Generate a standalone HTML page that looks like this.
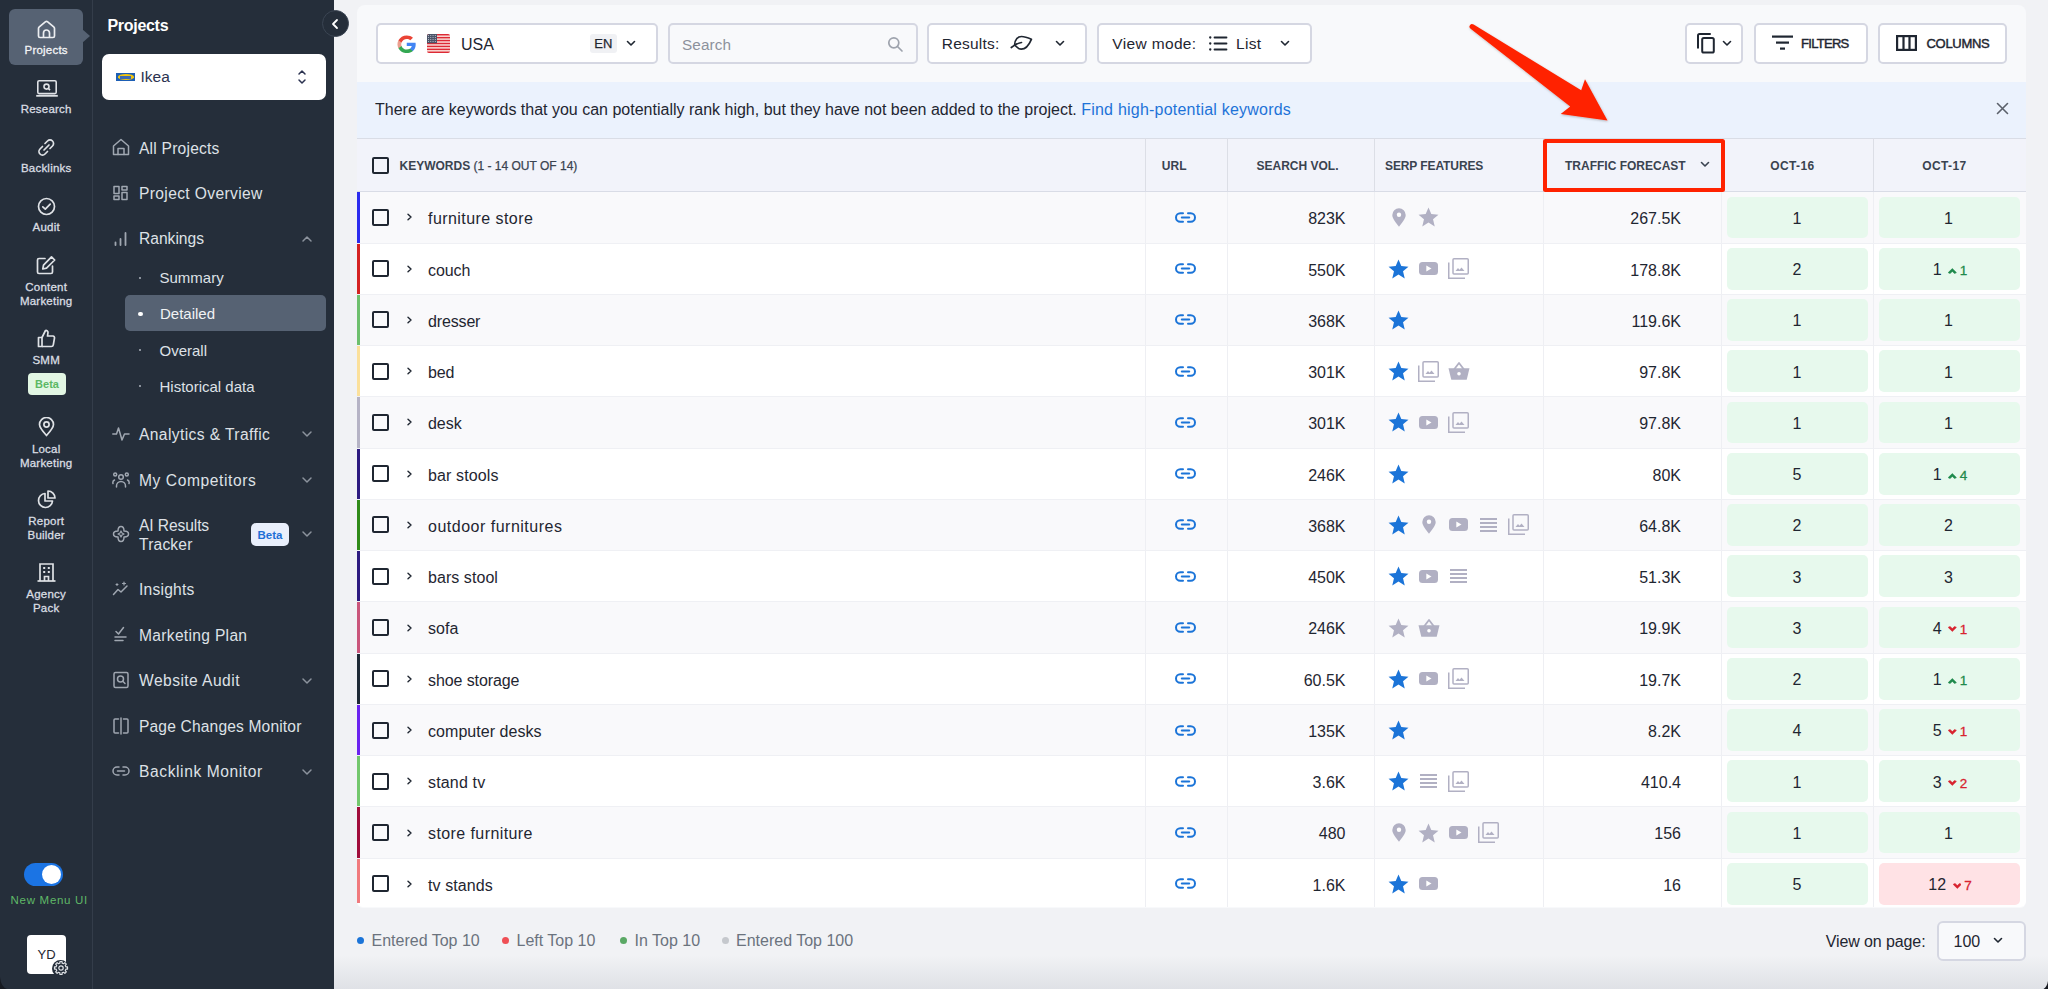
<!DOCTYPE html>
<html><head><meta charset="utf-8">
<style>
*{box-sizing:border-box;margin:0;padding:0}
html,body{width:2048px;height:989px;overflow:hidden}
body{position:relative;background:#f1f2f5;font-family:"Liberation Sans",sans-serif;color:#1f2631}
.a{position:absolute}
.t{white-space:nowrap}
svg{display:block;position:absolute}
</style></head><body>
<div class="a" style="left:0;top:0;width:92px;height:989px;background:#252e3a"></div>
<div class="a" style="left:92px;top:0;width:1px;height:989px;background:#343d4a"></div>
<div class="a" style="left:93px;top:0;width:241px;height:989px;background:#252e3a"></div>
<div class="a" style="left:9px;top:9px;width:74px;height:56px;border-radius:6px;background:#566273"></div>
<div class="a" style="left:82px;top:29px;width:0;height:0;border-top:7px solid transparent;border-bottom:7px solid transparent;border-left:8px solid #566273"></div>
<svg style="left:37px;top:19.5px" width="19" height="19" viewBox="0 0 19 19" fill="none" stroke="#eceef1" stroke-width="1.7" stroke-linejoin="round"><path d="M1.5 8.5 Q1.5 7.6 2.3 6.9 L8.3 1.9 Q9.5 1 10.7 1.9 L16.7 6.9 Q17.5 7.6 17.5 8.5 V16 Q17.5 17.5 16 17.5 H3 Q1.5 17.5 1.5 16 Z"/><path d="M6.5 17.5 V13 A3 3 0 0 1 12.5 13 V17.5"/></svg>
<div class="a t" style="left:0.20000000000000284px;width:92px;text-align:center;top:44.32px;font-size:11.5px;line-height:13.8px;color:#f3f4f6;letter-spacing:0.22px;-webkit-text-stroke:0.3px #f3f4f6;">Projects</div>
<svg style="left:35.5px;top:79px" width="22" height="18" viewBox="0 0 22 18" fill="none" stroke="#dfe2e6" stroke-width="1.6"><rect x="1.8" y="1.8" width="18.4" height="12.8" rx="1.3"/><path d="M0.2 16.8 H21.8" stroke-width="1.8"/><circle cx="10.5" cy="7.6" r="2.5"/><path d="M12.3 9.4 L14 11.1"/></svg>
<div class="a t" style="left:0.20000000000000284px;width:92px;text-align:center;top:103.32px;font-size:11.5px;line-height:13.8px;color:#d9dde2;letter-spacing:0.22px;-webkit-text-stroke:0.3px #d9dde2;">Research</div>
<svg style="left:37px;top:138px" width="19" height="19" viewBox="0 0 19 19" fill="none" stroke="#dfe2e6" stroke-width="1.7" stroke-linecap="round"><path d="M8 5.5 L10.5 3 A3.2 3.2 0 0 1 15.5 8 L13 10.5"/><path d="M10.5 13.5 L8 16 A3.2 3.2 0 0 1 3 11 L5.5 8.5"/><path d="M7 12 L12 7"/></svg>
<div class="a t" style="left:0.20000000000000284px;width:92px;text-align:center;top:162.32px;font-size:11.5px;line-height:13.8px;color:#d9dde2;letter-spacing:0.22px;-webkit-text-stroke:0.3px #d9dde2;">Backlinks</div>
<svg style="left:37px;top:197px" width="19" height="19" viewBox="0 0 19 19" fill="none" stroke="#dfe2e6" stroke-width="1.7" stroke-linecap="round" stroke-linejoin="round"><circle cx="9.5" cy="9.5" r="8"/><path d="M5.8 9.8 L8.3 12.2 L13.2 7.2"/></svg>
<div class="a t" style="left:0.20000000000000284px;width:92px;text-align:center;top:221.32px;font-size:11.5px;line-height:13.8px;color:#d9dde2;letter-spacing:0.22px;-webkit-text-stroke:0.3px #d9dde2;">Audit</div>
<svg style="left:36px;top:255px" width="21" height="20" viewBox="0 0 21 20" fill="none" stroke="#dfe2e6" stroke-width="1.7" stroke-linejoin="round" stroke-linecap="round"><path d="M9 3.5 H3 A1.5 1.5 0 0 0 1.5 5 V17 A1.5 1.5 0 0 0 3 18.5 H15 A1.5 1.5 0 0 0 16.5 17 V11"/><path d="M15.5 1.8 L18.7 5 L10.5 13.2 L6.8 14 L7.5 10.2 Z"/></svg>
<div class="a t" style="left:0.20000000000000284px;width:92px;text-align:center;top:280.82px;font-size:11.5px;line-height:13.8px;color:#d9dde2;letter-spacing:0.22px;-webkit-text-stroke:0.3px #d9dde2;">Content</div>
<div class="a t" style="left:0.20000000000000284px;width:92px;text-align:center;top:294.82px;font-size:11.5px;line-height:13.8px;color:#d9dde2;letter-spacing:0.22px;-webkit-text-stroke:0.3px #d9dde2;">Marketing</div>
<svg style="left:37px;top:329px" width="19" height="19" viewBox="0 0 19 19" fill="none" stroke="#dfe2e6" stroke-width="1.7" stroke-linejoin="round"><path d="M1.5 8.5 H5 V17.5 H1.5 Z"/><path d="M5 8.5 L8.5 1.5 A2 2 0 0 1 11 3.5 L10.5 7 H16 A1.7 1.7 0 0 1 17.5 9 L16.3 15.8 A2 2 0 0 1 14.3 17.5 H5"/></svg>
<div class="a t" style="left:0.20000000000000284px;width:92px;text-align:center;top:353.82px;font-size:11.5px;line-height:13.8px;color:#d9dde2;letter-spacing:0.22px;-webkit-text-stroke:0.3px #d9dde2;">SMM</div>
<div class="a" style="left:28px;top:373px;width:38px;height:22px;border-radius:4px;background:#e2f6e3"></div>
<div class="a t" style="left:28.0px;width:38px;text-align:center;top:377.59px;font-size:11px;line-height:13.2px;color:#5cb864;font-weight:bold;">Beta</div>
<svg style="left:38px;top:417px" width="17" height="20" viewBox="0 0 17 20" fill="none" stroke="#dfe2e6" stroke-width="1.7" stroke-linejoin="round"><path d="M8.5 18.5 C3.5 13 1.5 10 1.5 7.5 A7 7 0 0 1 15.5 7.5 C15.5 10 13.5 13 8.5 18.5 Z"/><circle cx="8.5" cy="7.5" r="2.6"/></svg>
<div class="a t" style="left:0.20000000000000284px;width:92px;text-align:center;top:442.82px;font-size:11.5px;line-height:13.8px;color:#d9dde2;letter-spacing:0.22px;-webkit-text-stroke:0.3px #d9dde2;">Local</div>
<div class="a t" style="left:0.20000000000000284px;width:92px;text-align:center;top:456.82px;font-size:11.5px;line-height:13.8px;color:#d9dde2;letter-spacing:0.22px;-webkit-text-stroke:0.3px #d9dde2;">Marketing</div>
<svg style="left:37px;top:490px" width="19" height="19" viewBox="0 0 19 19" fill="none" stroke="#dfe2e6" stroke-width="1.7" stroke-linejoin="round"><path d="M8 3.5 A7 7 0 1 0 15.5 11 H8 Z"/><path d="M11 1 A7 7 0 0 1 18 8 H11 Z"/></svg>
<div class="a t" style="left:0.20000000000000284px;width:92px;text-align:center;top:515.32px;font-size:11.5px;line-height:13.8px;color:#d9dde2;letter-spacing:0.22px;-webkit-text-stroke:0.3px #d9dde2;">Report</div>
<div class="a t" style="left:0.20000000000000284px;width:92px;text-align:center;top:528.82px;font-size:11.5px;line-height:13.8px;color:#d9dde2;letter-spacing:0.22px;-webkit-text-stroke:0.3px #d9dde2;">Builder</div>
<svg style="left:36px;top:562px" width="21" height="20" viewBox="0 0 21 20" fill="none" stroke="#dfe2e6" stroke-width="1.7"><path d="M4 19 V2 H17 V19"/><path d="M1.5 19 H19.5"/><path d="M8.5 19 V14.5 H12.5 V19"/><path d="M7.2 6 h2 M11.8 6 h2 M7.2 10 h2 M11.8 10 h2" stroke-width="1.8"/></svg>
<div class="a t" style="left:0.20000000000000284px;width:92px;text-align:center;top:588.32px;font-size:11.5px;line-height:13.8px;color:#d9dde2;letter-spacing:0.22px;-webkit-text-stroke:0.3px #d9dde2;">Agency</div>
<div class="a t" style="left:0.20000000000000284px;width:92px;text-align:center;top:601.82px;font-size:11.5px;line-height:13.8px;color:#d9dde2;letter-spacing:0.22px;-webkit-text-stroke:0.3px #d9dde2;">Pack</div>
<div class="a" style="left:24px;top:863px;width:39px;height:23px;border-radius:12px;background:#1b74e4"></div>
<div class="a" style="left:42px;top:865px;width:19px;height:19px;border-radius:50%;background:#fff"></div>
<div class="a t" style="left:3.299999999999997px;width:92px;text-align:center;top:893.82px;font-size:11.5px;line-height:13.8px;color:#5fb867;letter-spacing:0.7px;">New Menu UI</div>
<div class="a" style="left:27px;top:935px;width:39px;height:39px;border-radius:4px;background:#fff"></div>
<div class="a t" style="left:26.5px;width:40px;text-align:center;top:946.70px;font-size:13px;line-height:15.6px;color:#1f2631;">YD</div>
<div class="a" style="left:52px;top:960px;width:17px;height:17px;border-radius:50%;background:#252e3a"></div>
<svg style="left:52.5px;top:960px" width="16" height="16" viewBox="0 0 16 16" fill="none" stroke="#dfe2e6" stroke-width="1.2" stroke-linejoin="round"><circle cx="8" cy="8" r="2.2"/><path d="M12.87 6.88 L14.52 6.97 L14.52 9.03 L12.87 9.12 L12.24 10.65 L13.34 11.88 L11.88 13.34 L10.65 12.24 L9.12 12.87 L9.03 14.52 L6.97 14.52 L6.88 12.87 L5.35 12.24 L4.12 13.34 L2.66 11.88 L3.76 10.65 L3.13 9.12 L1.48 9.03 L1.48 6.97 L3.13 6.88 L3.76 5.35 L2.66 4.12 L4.12 2.66 L5.35 3.76 L6.88 3.13 L6.97 1.48 L9.03 1.48 L9.12 3.13 L10.65 3.76 L11.88 2.66 L13.34 4.12 L12.24 5.35 Z"/></svg>
<div class="a" style="left:357px;top:5px;width:1669px;height:903px;background:#f8f9fb;border-radius:8px 8px 6px 6px;overflow:hidden"></div>
<div class="a" style="left:376px;top:23px;width:282px;height:40.5px;border:2px solid #d5d7e2;border-radius:5px;background:#fff"></div>
<svg style="left:396.5px;top:34.5px" width="19.5" height="18.5" viewBox="1 1 46 46" preserveAspectRatio="none"><path fill="#4285F4" d="M45.1 24.5c0-1.6-.1-3.1-.4-4.5H24v8.5h11.8c-.5 2.8-2.1 5.1-4.4 6.7v5.5h7.1c4.2-3.9 6.6-9.6 6.6-16.2z"/><path fill="#34A853" d="M24 46c5.9 0 10.9-2 14.5-5.3l-7.1-5.5c-2 1.3-4.5 2.1-7.4 2.1-5.7 0-10.6-3.9-12.3-9.1H4.4v5.7C8 41.1 15.4 46 24 46z"/><path fill="#ec9f8f" d="M11.7 28.2c-.4-1.3-.7-2.7-.7-4.2s.3-2.9.7-4.2v-5.7H4.4C2.9 17.1 2 20.4 2 24s.9 6.9 2.4 9.9l7.3-5.7z"/><path fill="#EA4335" d="M24 10.7c3.2 0 6.1 1.1 8.4 3.3l6.3-6.3C34.9 4.1 29.9 2 24 2 15.4 2 8 6.9 4.4 14.1l7.3 5.7c1.7-5.2 6.6-9.1 12.3-9.1z"/></svg>
<svg style="left:427px;top:34px" width="23" height="19" viewBox="0 0 23 19"><defs><clipPath id="fc"><rect width="23" height="19" rx="2"/></clipPath></defs><g clip-path="url(#fc)"><rect width="23" height="19" fill="#fbe1dc"/><rect y="0.000" width="23" height="1.462" fill="#dd2a35"/><rect y="2.923" width="23" height="1.462" fill="#dd2a35"/><rect y="5.846" width="23" height="1.462" fill="#dd2a35"/><rect y="8.769" width="23" height="1.462" fill="#dd2a35"/><rect y="11.692" width="23" height="1.462" fill="#dd2a35"/><rect y="14.615" width="23" height="1.462" fill="#dd2a35"/><rect y="17.538" width="23" height="1.462" fill="#dd2a35"/><rect width="10" height="9.2" fill="#4b5468"/><g fill="#c9ccd8"><rect x="1.0" y="1.0" width="0.9" height="0.9"/><rect x="3.3" y="1.0" width="0.9" height="0.9"/><rect x="5.6" y="1.0" width="0.9" height="0.9"/><rect x="7.9" y="1.0" width="0.9" height="0.9"/><rect x="1.0" y="3.0" width="0.9" height="0.9"/><rect x="3.3" y="3.0" width="0.9" height="0.9"/><rect x="5.6" y="3.0" width="0.9" height="0.9"/><rect x="7.9" y="3.0" width="0.9" height="0.9"/><rect x="1.0" y="5.0" width="0.9" height="0.9"/><rect x="3.3" y="5.0" width="0.9" height="0.9"/><rect x="5.6" y="5.0" width="0.9" height="0.9"/><rect x="7.9" y="5.0" width="0.9" height="0.9"/><rect x="1.0" y="7.0" width="0.9" height="0.9"/><rect x="3.3" y="7.0" width="0.9" height="0.9"/><rect x="5.6" y="7.0" width="0.9" height="0.9"/><rect x="7.9" y="7.0" width="0.9" height="0.9"/></g></g></svg>
<div class="a t" style="left:461px;top:34.86px;font-size:16px;line-height:19.2px;color:#1f2631;">USA</div>
<div class="a" style="left:590px;top:34px;width:27px;height:19px;border-radius:3px;background:#f0f1f4"></div>
<div class="a t" style="left:583.3px;width:40px;text-align:center;top:36.40px;font-size:13px;line-height:15.6px;color:#1f2631;-webkit-text-stroke:0.25px #1f2631;">EN</div>
<svg style="left:625.5px;top:39.7px" width="10" height="7" viewBox="0 0 10 7" fill="none" stroke="#1f2631" stroke-width="1.6" stroke-linecap="round" stroke-linejoin="round"><path d="M1.5 1.5 L5 5 L8.5 1.5"/></svg>
<div class="a" style="left:667.5px;top:23px;width:250.0px;height:40.5px;border:2px solid #d5d7e2;border-radius:5px;background:#f8f9fb"></div>
<div class="a t" style="left:682px;top:35.52px;font-size:15.3px;line-height:18.36px;color:#8c919b;letter-spacing:0.1px;">Search</div>
<svg style="left:887px;top:35.5px" width="17" height="17" viewBox="0 0 17 17" fill="none" stroke="#9ea3ad" stroke-width="1.7" stroke-linecap="round"><circle cx="6.8" cy="6.8" r="5"/><path d="M10.5 10.5 L15 15"/></svg>
<div class="a" style="left:927px;top:23px;width:159.5px;height:40.5px;border:2px solid #d5d7e2;border-radius:5px;background:#fff"></div>
<div class="a t" style="left:941.8px;top:35.33px;font-size:15.5px;line-height:18.6px;color:#1f2631;letter-spacing:0.2px;">Results:</div>
<svg style="left:1010px;top:35px" width="23" height="16" viewBox="0 0 23 16" fill="none" stroke="#1f2631" stroke-width="1.7" stroke-linecap="round" stroke-linejoin="round"><path d="M4.7 10.1 C4.5 4.5 8 1.5 11.5 1.5 C15 1.5 18.5 3 21.4 4.3 C19 10 15.5 14.2 11.2 14.2 C8.5 14.2 6.5 12 4.7 10.1 Z"/><path d="M1.3 12.5 L4.7 10.1 C7 8.8 9 8 11.5 7.5"/></svg>
<svg style="left:1054.5px;top:39.7px" width="10" height="7" viewBox="0 0 10 7" fill="none" stroke="#1f2631" stroke-width="1.6" stroke-linecap="round" stroke-linejoin="round"><path d="M1.5 1.5 L5 5 L8.5 1.5"/></svg>
<div class="a" style="left:1096.5px;top:23px;width:215.0px;height:40.5px;border:2px solid #d5d7e2;border-radius:5px;background:#fff"></div>
<div class="a t" style="left:1112.3px;top:35.33px;font-size:15.5px;line-height:18.6px;color:#1f2631;letter-spacing:0.35px;">View mode:</div>
<svg style="left:1209px;top:36px" width="19" height="15" viewBox="0 0 19 15" fill="none" stroke="#1f2631" stroke-width="1.8" stroke-linecap="round"><path d="M1.2 1.5 h0.1 M1.2 7.5 h0.1 M1.2 13.5 h0.1" stroke-width="2.3"/><path d="M5.5 1.5 H17.5 M5.5 7.5 H17.5 M5.5 13.5 H17.5"/></svg>
<div class="a t" style="left:1236px;top:35.33px;font-size:15.5px;line-height:18.6px;color:#1f2631;letter-spacing:0.3px;">List</div>
<svg style="left:1279.5px;top:40.2px" width="10" height="7" viewBox="0 0 10 7" fill="none" stroke="#1f2631" stroke-width="1.6" stroke-linecap="round" stroke-linejoin="round"><path d="M1.5 1.5 L5 5 L8.5 1.5"/></svg>
<div class="a" style="left:1684.5px;top:23px;width:58.5px;height:40.5px;border:2px solid #d5d7e2;border-radius:5px;background:#fff"></div>
<svg style="left:1696px;top:32px" width="20" height="22" viewBox="0 0 20 22" fill="none" stroke="#1f2631" stroke-width="2" stroke-linecap="round" stroke-linejoin="round"><path d="M2 15.7 V3.5 Q2 2 3.5 2 H14"/><rect x="6.2" y="5.9" width="11.6" height="14.7" rx="1.6"/></svg>
<svg style="left:1722px;top:40.2px" width="10" height="7" viewBox="0 0 10 7" fill="none" stroke="#1f2631" stroke-width="1.6" stroke-linecap="round" stroke-linejoin="round"><path d="M1.5 1.5 L5 5 L8.5 1.5"/></svg>
<div class="a" style="left:1753.5px;top:23px;width:114.0px;height:40.5px;border:2px solid #d5d7e2;border-radius:5px;background:#fff"></div>
<svg style="left:1772px;top:35px" width="21" height="16" viewBox="0 0 21 16" fill="#1f2631"><rect x="0" y="0.5" width="21" height="2.2"/><rect x="4" y="6.5" width="13" height="2.2"/><rect x="8" y="12.5" width="5" height="2.2"/></svg>
<div class="a t" style="left:1801px;top:36.20px;font-size:13px;line-height:15.6px;color:#1f2631;letter-spacing:-0.7px;-webkit-text-stroke:0.45px #1f2631;">FILTERS</div>
<div class="a" style="left:1877.5px;top:23px;width:129.0px;height:40.5px;border:2px solid #d5d7e2;border-radius:5px;background:#fff"></div>
<svg style="left:1896px;top:35px" width="21" height="16" viewBox="0 0 21 16" fill="none" stroke="#1f2631" stroke-width="2.2"><rect x="1.1" y="1.1" width="18.8" height="13.8"/><path d="M7.5 1 V15 M13.5 1 V15"/></svg>
<div class="a t" style="left:1926.5px;top:36.20px;font-size:13px;line-height:15.6px;color:#1f2631;letter-spacing:-0.3px;-webkit-text-stroke:0.45px #1f2631;">COLUMNS</div>
<div class="a" style="left:357px;top:82px;width:1669px;height:57px;background:#ebf2fd;border-bottom:1px solid #d9dde6"></div>
<div class="a t" style="left:375px;top:100px;font-size:16px;line-height:20px;color:#1f2631">There are keywords that you can potentially rank high, but they have not been added to the project. <span style="color:#1e73d8;letter-spacing:0.22px">Find high-potential keywords</span></div>
<svg style="left:1996px;top:102px" width="13" height="13" viewBox="0 0 13 13" fill="none" stroke="#5b616b" stroke-width="1.6" stroke-linecap="round"><path d="M1.5 1.5 L11.5 11.5 M11.5 1.5 L1.5 11.5"/></svg>
<div class="a" style="left:357px;top:139px;width:1669px;height:53px;background:#f2f3fa;border-bottom:1px solid #d9dce6"></div>
<div class="a" style="left:1145px;top:138px;width:1px;height:53px;background:#dcdee6"></div>
<div class="a" style="left:1227px;top:138px;width:1px;height:53px;background:#dcdee6"></div>
<div class="a" style="left:1374px;top:138px;width:1px;height:53px;background:#dcdee6"></div>
<div class="a" style="left:1543px;top:138px;width:1px;height:53px;background:#dcdee6"></div>
<div class="a" style="left:1721px;top:138px;width:1px;height:53px;background:#dcdee6"></div>
<div class="a" style="left:1873px;top:138px;width:1px;height:53px;background:#dcdee6"></div>
<div class="a" style="left:371.5px;top:156.5px;width:17px;height:17px;border:2px solid #1f2631;border-radius:2px"></div>
<div class="a t" style="left:399.5px;top:158.64px;font-size:12px;line-height:14.4px;color:#3a4350;font-weight:bold;">KEYWORDS <span style="font-weight:normal;-webkit-text-stroke:0.25px #3a4350">(1 - 14 OUT OF 14)</span></div>
<div class="a t" style="left:1134.2px;width:80px;text-align:center;top:158.64px;font-size:12px;line-height:14.4px;color:#3a4350;font-weight:bold;">URL</div>
<div class="a t" style="left:1227.5px;width:140px;text-align:center;top:158.64px;font-size:12px;line-height:14.4px;color:#3a4350;font-weight:bold;">SEARCH VOL.</div>
<div class="a t" style="left:1385px;top:158.64px;font-size:12px;line-height:14.4px;color:#3a4350;font-weight:bold;letter-spacing:-0.1px;">SERP FEATURES</div>
<div class="a t" style="left:1565px;top:158.64px;font-size:12px;line-height:14.4px;color:#3a4350;font-weight:bold;">TRAFFIC FORECAST</div>
<svg style="left:1700px;top:161.0px" width="10" height="7" viewBox="0 0 10 7" fill="none" stroke="#3a4350" stroke-width="1.6" stroke-linecap="round" stroke-linejoin="round"><path d="M1.5 1.5 L5 5 L8.5 1.5"/></svg>
<div class="a t" style="left:1742.4px;width:100px;text-align:center;top:158.64px;font-size:12px;line-height:14.4px;color:#3a4350;font-weight:bold;letter-spacing:0.35px;">OCT-16</div>
<div class="a t" style="left:1894.4px;width:100px;text-align:center;top:158.64px;font-size:12px;line-height:14.4px;color:#3a4350;font-weight:bold;letter-spacing:0.35px;">OCT-17</div>
<div class="a" style="left:357px;top:191.80px;width:1669px;height:51.26px;background:#f9f9fb;"></div>
<div class="a" style="left:357px;top:242.56px;width:1669px;height:1px;background:#eff0f4;z-index:1"></div>
<div class="a" style="left:357px;top:192.30px;width:3px;height:50.26px;background:#2b2bef"></div>
<div class="a" style="left:1145px;top:191.80px;width:1px;height:51.26px;background:#eeeff3"></div>
<div class="a" style="left:1227px;top:191.80px;width:1px;height:51.26px;background:#eeeff3"></div>
<div class="a" style="left:1374px;top:191.80px;width:1px;height:51.26px;background:#eeeff3"></div>
<div class="a" style="left:1543px;top:191.80px;width:1px;height:51.26px;background:#eeeff3"></div>
<div class="a" style="left:1721px;top:191.80px;width:1px;height:51.26px;background:#eeeff3"></div>
<div class="a" style="left:1873px;top:191.80px;width:1px;height:51.26px;background:#eeeff3"></div>
<div class="a" style="left:371.5px;top:208.93px;width:17px;height:17px;border:2px solid #1f2631;border-radius:2px"></div>
<svg style="left:405.5px;top:213.43px" width="7" height="8" viewBox="0 0 7 8" fill="none" stroke="#1f2631" stroke-width="1.4" stroke-linecap="round" stroke-linejoin="round"><path d="M2 1.2 L5 4 L2 6.8"/></svg>
<div class="a t" style="left:428px;top:209.29px;font-size:16px;line-height:19.2px;color:#1f2631;letter-spacing:0.44px;">furniture store</div>
<svg style="left:1175px;top:211.93px" width="21" height="11" viewBox="0 0 21 11" fill="none" stroke="#1b74d8" stroke-width="2" stroke-linecap="round"><path d="M8 1.2 H5.3 A4.3 4.3 0 0 0 5.3 9.8 H8"/><path d="M13 1.2 H15.7 A4.3 4.3 0 0 1 15.7 9.8 H13"/><path d="M6.8 5.5 H14.2"/></svg>
<div class="a t" style="left:1225.5px;width:120px;text-align:right;top:209.29px;font-size:16px;line-height:19.2px;color:#1f2631;">823K</div>
<svg style="left:1391.5px;top:207.93px" width="14" height="19" viewBox="0 0 14 19"><path fill="#b1b0c3" d="M7 0.3 A6.7 6.7 0 0 1 13.7 7 C13.7 10.8 10 14.5 7 18.8 C4 14.5 0.3 10.8 0.3 7 A6.7 6.7 0 0 1 7 0.3 Z"/><circle cx="7" cy="6.8" r="2.2" fill="#fff"/></svg>
<svg style="left:1417.5px;top:207.43px" width="21" height="20" viewBox="0.4 0.2 23.2 22"><path fill="#b1b0c3" d="M12 0.8 L15.1 8 L23 8.6 L17 13.8 L18.9 21.6 L12 17.4 L5.1 21.6 L7 13.8 L1 8.6 L8.9 8 Z"/></svg>
<div class="a t" style="left:1561px;width:120px;text-align:right;top:209.29px;font-size:16px;line-height:19.2px;color:#1f2631;">267.5K</div>
<div class="a" style="left:1726.5px;top:196.50px;width:141.5px;height:41.86px;border-radius:5px;background:#e7f9ed"></div>
<div class="a t" style="left:1757.0px;width:80px;text-align:center;top:208.79px;font-size:16px;line-height:19.2px;color:#1f2631;">1</div>
<div class="a" style="left:1879px;top:196.50px;width:141px;height:41.86px;border-radius:5px;background:#e7f9ed"></div>
<div class="a t" style="left:1908.5px;width:80px;text-align:center;top:208.79px;font-size:16px;line-height:19.2px;color:#1f2631;">1</div>
<div class="a" style="left:357px;top:243.06px;width:1669px;height:51.26px;background:#ffffff;"></div>
<div class="a" style="left:357px;top:293.82px;width:1669px;height:1px;background:#eff0f4;z-index:1"></div>
<div class="a" style="left:357px;top:243.56px;width:3px;height:50.26px;background:#d42222"></div>
<div class="a" style="left:1145px;top:243.06px;width:1px;height:51.26px;background:#eeeff3"></div>
<div class="a" style="left:1227px;top:243.06px;width:1px;height:51.26px;background:#eeeff3"></div>
<div class="a" style="left:1374px;top:243.06px;width:1px;height:51.26px;background:#eeeff3"></div>
<div class="a" style="left:1543px;top:243.06px;width:1px;height:51.26px;background:#eeeff3"></div>
<div class="a" style="left:1721px;top:243.06px;width:1px;height:51.26px;background:#eeeff3"></div>
<div class="a" style="left:1873px;top:243.06px;width:1px;height:51.26px;background:#eeeff3"></div>
<div class="a" style="left:371.5px;top:260.19px;width:17px;height:17px;border:2px solid #1f2631;border-radius:2px"></div>
<svg style="left:405.5px;top:264.69px" width="7" height="8" viewBox="0 0 7 8" fill="none" stroke="#1f2631" stroke-width="1.4" stroke-linecap="round" stroke-linejoin="round"><path d="M2 1.2 L5 4 L2 6.8"/></svg>
<div class="a t" style="left:428px;top:260.55px;font-size:16px;line-height:19.2px;color:#1f2631;letter-spacing:-0.1px;">couch</div>
<svg style="left:1175px;top:263.19px" width="21" height="11" viewBox="0 0 21 11" fill="none" stroke="#1b74d8" stroke-width="2" stroke-linecap="round"><path d="M8 1.2 H5.3 A4.3 4.3 0 0 0 5.3 9.8 H8"/><path d="M13 1.2 H15.7 A4.3 4.3 0 0 1 15.7 9.8 H13"/><path d="M6.8 5.5 H14.2"/></svg>
<div class="a t" style="left:1225.5px;width:120px;text-align:right;top:260.55px;font-size:16px;line-height:19.2px;color:#1f2631;">550K</div>
<svg style="left:1387.5px;top:258.69px" width="21" height="20" viewBox="0.4 0.2 23.2 22"><path fill="#1b74d8" d="M12 0.8 L15.1 8 L23 8.6 L17 13.8 L18.9 21.6 L12 17.4 L5.1 21.6 L7 13.8 L1 8.6 L8.9 8 Z"/></svg>
<svg style="left:1419.0px;top:262.19px" width="19" height="13" viewBox="0 0 19 13"><rect width="19" height="13" rx="3.5" fill="#b1b0c3"/><path d="M7.3 3.5 L12.5 6.5 L7.3 9.5 Z" fill="#fff"/></svg>
<svg style="left:1448.0px;top:258.19px" width="21" height="21" viewBox="0 0 21 21" fill="none" stroke="#b1b0c3" stroke-width="1.5"><rect x="5" y="0.75" width="15.25" height="15.25" rx="1"/><path d="M0.75 4.5 V20.25 H17"/><path d="M7.5 13 L10 10 L11.5 11.8 L13.5 9.5 L16.5 13 Z" fill="#b1b0c3" stroke="none"/></svg>
<div class="a t" style="left:1561px;width:120px;text-align:right;top:260.55px;font-size:16px;line-height:19.2px;color:#1f2631;">178.8K</div>
<div class="a" style="left:1726.5px;top:247.76px;width:141.5px;height:41.86px;border-radius:5px;background:#e7f9ed"></div>
<div class="a t" style="left:1757.0px;width:80px;text-align:center;top:260.05px;font-size:16px;line-height:19.2px;color:#1f2631;">2</div>
<div class="a" style="left:1879px;top:247.76px;width:141px;height:41.86px;border-radius:5px;background:#e7f9ed"></div>
<div class="a t" style="left:1890.0px;width:120px;text-align:center;top:260.05px;font-size:16px;line-height:19.2px;color:#1f2631;">1<svg style="position:relative;display:inline-block;margin:0 3px 0 6.5px;vertical-align:1.5px" width="8.6" height="6" viewBox="0 0 8.6 6"><path d="M0.2 4.6 L4.3 0.6 L8.4 4.6 L6.6 5.6 L4.3 3.4 L2 5.6 Z" fill="#1f8a4c" stroke="#1f8a4c" stroke-width="0.6" stroke-linejoin="round"/></svg><span style="color:#1f8a4c;font-size:13.5px;-webkit-text-stroke:0.3px #1f8a4c">1</span></div>
<div class="a" style="left:357px;top:294.32px;width:1669px;height:51.26px;background:#f9f9fb;"></div>
<div class="a" style="left:357px;top:345.08px;width:1669px;height:1px;background:#eff0f4;z-index:1"></div>
<div class="a" style="left:357px;top:294.82px;width:3px;height:50.26px;background:#6dbf6d"></div>
<div class="a" style="left:1145px;top:294.32px;width:1px;height:51.26px;background:#eeeff3"></div>
<div class="a" style="left:1227px;top:294.32px;width:1px;height:51.26px;background:#eeeff3"></div>
<div class="a" style="left:1374px;top:294.32px;width:1px;height:51.26px;background:#eeeff3"></div>
<div class="a" style="left:1543px;top:294.32px;width:1px;height:51.26px;background:#eeeff3"></div>
<div class="a" style="left:1721px;top:294.32px;width:1px;height:51.26px;background:#eeeff3"></div>
<div class="a" style="left:1873px;top:294.32px;width:1px;height:51.26px;background:#eeeff3"></div>
<div class="a" style="left:371.5px;top:311.45px;width:17px;height:17px;border:2px solid #1f2631;border-radius:2px"></div>
<svg style="left:405.5px;top:315.95px" width="7" height="8" viewBox="0 0 7 8" fill="none" stroke="#1f2631" stroke-width="1.4" stroke-linecap="round" stroke-linejoin="round"><path d="M2 1.2 L5 4 L2 6.8"/></svg>
<div class="a t" style="left:428px;top:311.81px;font-size:16px;line-height:19.2px;color:#1f2631;letter-spacing:-0.15px;">dresser</div>
<svg style="left:1175px;top:314.45px" width="21" height="11" viewBox="0 0 21 11" fill="none" stroke="#1b74d8" stroke-width="2" stroke-linecap="round"><path d="M8 1.2 H5.3 A4.3 4.3 0 0 0 5.3 9.8 H8"/><path d="M13 1.2 H15.7 A4.3 4.3 0 0 1 15.7 9.8 H13"/><path d="M6.8 5.5 H14.2"/></svg>
<div class="a t" style="left:1225.5px;width:120px;text-align:right;top:311.81px;font-size:16px;line-height:19.2px;color:#1f2631;">368K</div>
<svg style="left:1387.5px;top:309.95px" width="21" height="20" viewBox="0.4 0.2 23.2 22"><path fill="#1b74d8" d="M12 0.8 L15.1 8 L23 8.6 L17 13.8 L18.9 21.6 L12 17.4 L5.1 21.6 L7 13.8 L1 8.6 L8.9 8 Z"/></svg>
<div class="a t" style="left:1561px;width:120px;text-align:right;top:311.81px;font-size:16px;line-height:19.2px;color:#1f2631;">119.6K</div>
<div class="a" style="left:1726.5px;top:299.02px;width:141.5px;height:41.86px;border-radius:5px;background:#e7f9ed"></div>
<div class="a t" style="left:1757.0px;width:80px;text-align:center;top:311.31px;font-size:16px;line-height:19.2px;color:#1f2631;">1</div>
<div class="a" style="left:1879px;top:299.02px;width:141px;height:41.86px;border-radius:5px;background:#e7f9ed"></div>
<div class="a t" style="left:1908.5px;width:80px;text-align:center;top:311.31px;font-size:16px;line-height:19.2px;color:#1f2631;">1</div>
<div class="a" style="left:357px;top:345.58px;width:1669px;height:51.26px;background:#ffffff;"></div>
<div class="a" style="left:357px;top:396.34px;width:1669px;height:1px;background:#eff0f4;z-index:1"></div>
<div class="a" style="left:357px;top:346.08px;width:3px;height:50.26px;background:#fbe09b"></div>
<div class="a" style="left:1145px;top:345.58px;width:1px;height:51.26px;background:#eeeff3"></div>
<div class="a" style="left:1227px;top:345.58px;width:1px;height:51.26px;background:#eeeff3"></div>
<div class="a" style="left:1374px;top:345.58px;width:1px;height:51.26px;background:#eeeff3"></div>
<div class="a" style="left:1543px;top:345.58px;width:1px;height:51.26px;background:#eeeff3"></div>
<div class="a" style="left:1721px;top:345.58px;width:1px;height:51.26px;background:#eeeff3"></div>
<div class="a" style="left:1873px;top:345.58px;width:1px;height:51.26px;background:#eeeff3"></div>
<div class="a" style="left:371.5px;top:362.71px;width:17px;height:17px;border:2px solid #1f2631;border-radius:2px"></div>
<svg style="left:405.5px;top:367.21px" width="7" height="8" viewBox="0 0 7 8" fill="none" stroke="#1f2631" stroke-width="1.4" stroke-linecap="round" stroke-linejoin="round"><path d="M2 1.2 L5 4 L2 6.8"/></svg>
<div class="a t" style="left:428px;top:363.07px;font-size:16px;line-height:19.2px;color:#1f2631;letter-spacing:-0.15px;">bed</div>
<svg style="left:1175px;top:365.71px" width="21" height="11" viewBox="0 0 21 11" fill="none" stroke="#1b74d8" stroke-width="2" stroke-linecap="round"><path d="M8 1.2 H5.3 A4.3 4.3 0 0 0 5.3 9.8 H8"/><path d="M13 1.2 H15.7 A4.3 4.3 0 0 1 15.7 9.8 H13"/><path d="M6.8 5.5 H14.2"/></svg>
<div class="a t" style="left:1225.5px;width:120px;text-align:right;top:363.07px;font-size:16px;line-height:19.2px;color:#1f2631;">301K</div>
<svg style="left:1387.5px;top:361.21000000000004px" width="21" height="20" viewBox="0.4 0.2 23.2 22"><path fill="#1b74d8" d="M12 0.8 L15.1 8 L23 8.6 L17 13.8 L18.9 21.6 L12 17.4 L5.1 21.6 L7 13.8 L1 8.6 L8.9 8 Z"/></svg>
<svg style="left:1418.0px;top:360.71000000000004px" width="21" height="21" viewBox="0 0 21 21" fill="none" stroke="#b1b0c3" stroke-width="1.5"><rect x="5" y="0.75" width="15.25" height="15.25" rx="1"/><path d="M0.75 4.5 V20.25 H17"/><path d="M7.5 13 L10 10 L11.5 11.8 L13.5 9.5 L16.5 13 Z" fill="#b1b0c3" stroke="none"/></svg>
<svg style="left:1447.5px;top:361.21000000000004px" width="22" height="20" viewBox="0 0 22 20"><path d="M6 8.5 L11 2 L16 8.5" fill="none" stroke="#b1b0c3" stroke-width="1.8" stroke-linejoin="round"/><path fill="#b1b0c3" d="M0.5 7.3 H21.5 L18.7 18.8 H3.3 Z"/><circle cx="11" cy="12.8" r="1.8" fill="#fff"/></svg>
<div class="a t" style="left:1561px;width:120px;text-align:right;top:363.07px;font-size:16px;line-height:19.2px;color:#1f2631;">97.8K</div>
<div class="a" style="left:1726.5px;top:350.28px;width:141.5px;height:41.86px;border-radius:5px;background:#e7f9ed"></div>
<div class="a t" style="left:1757.0px;width:80px;text-align:center;top:362.57px;font-size:16px;line-height:19.2px;color:#1f2631;">1</div>
<div class="a" style="left:1879px;top:350.28px;width:141px;height:41.86px;border-radius:5px;background:#e7f9ed"></div>
<div class="a t" style="left:1908.5px;width:80px;text-align:center;top:362.57px;font-size:16px;line-height:19.2px;color:#1f2631;">1</div>
<div class="a" style="left:357px;top:396.84px;width:1669px;height:51.26px;background:#f9f9fb;"></div>
<div class="a" style="left:357px;top:447.60px;width:1669px;height:1px;background:#eff0f4;z-index:1"></div>
<div class="a" style="left:357px;top:397.34px;width:3px;height:50.26px;background:#b5b3c5"></div>
<div class="a" style="left:1145px;top:396.84px;width:1px;height:51.26px;background:#eeeff3"></div>
<div class="a" style="left:1227px;top:396.84px;width:1px;height:51.26px;background:#eeeff3"></div>
<div class="a" style="left:1374px;top:396.84px;width:1px;height:51.26px;background:#eeeff3"></div>
<div class="a" style="left:1543px;top:396.84px;width:1px;height:51.26px;background:#eeeff3"></div>
<div class="a" style="left:1721px;top:396.84px;width:1px;height:51.26px;background:#eeeff3"></div>
<div class="a" style="left:1873px;top:396.84px;width:1px;height:51.26px;background:#eeeff3"></div>
<div class="a" style="left:371.5px;top:413.97px;width:17px;height:17px;border:2px solid #1f2631;border-radius:2px"></div>
<svg style="left:405.5px;top:418.47px" width="7" height="8" viewBox="0 0 7 8" fill="none" stroke="#1f2631" stroke-width="1.4" stroke-linecap="round" stroke-linejoin="round"><path d="M2 1.2 L5 4 L2 6.8"/></svg>
<div class="a t" style="left:428px;top:414.33px;font-size:16px;line-height:19.2px;color:#1f2631;letter-spacing:-0.04px;">desk</div>
<svg style="left:1175px;top:416.97px" width="21" height="11" viewBox="0 0 21 11" fill="none" stroke="#1b74d8" stroke-width="2" stroke-linecap="round"><path d="M8 1.2 H5.3 A4.3 4.3 0 0 0 5.3 9.8 H8"/><path d="M13 1.2 H15.7 A4.3 4.3 0 0 1 15.7 9.8 H13"/><path d="M6.8 5.5 H14.2"/></svg>
<div class="a t" style="left:1225.5px;width:120px;text-align:right;top:414.33px;font-size:16px;line-height:19.2px;color:#1f2631;">301K</div>
<svg style="left:1387.5px;top:412.47px" width="21" height="20" viewBox="0.4 0.2 23.2 22"><path fill="#1b74d8" d="M12 0.8 L15.1 8 L23 8.6 L17 13.8 L18.9 21.6 L12 17.4 L5.1 21.6 L7 13.8 L1 8.6 L8.9 8 Z"/></svg>
<svg style="left:1419.0px;top:415.97px" width="19" height="13" viewBox="0 0 19 13"><rect width="19" height="13" rx="3.5" fill="#b1b0c3"/><path d="M7.3 3.5 L12.5 6.5 L7.3 9.5 Z" fill="#fff"/></svg>
<svg style="left:1448.0px;top:411.97px" width="21" height="21" viewBox="0 0 21 21" fill="none" stroke="#b1b0c3" stroke-width="1.5"><rect x="5" y="0.75" width="15.25" height="15.25" rx="1"/><path d="M0.75 4.5 V20.25 H17"/><path d="M7.5 13 L10 10 L11.5 11.8 L13.5 9.5 L16.5 13 Z" fill="#b1b0c3" stroke="none"/></svg>
<div class="a t" style="left:1561px;width:120px;text-align:right;top:414.33px;font-size:16px;line-height:19.2px;color:#1f2631;">97.8K</div>
<div class="a" style="left:1726.5px;top:401.54px;width:141.5px;height:41.86px;border-radius:5px;background:#e7f9ed"></div>
<div class="a t" style="left:1757.0px;width:80px;text-align:center;top:413.83px;font-size:16px;line-height:19.2px;color:#1f2631;">1</div>
<div class="a" style="left:1879px;top:401.54px;width:141px;height:41.86px;border-radius:5px;background:#e7f9ed"></div>
<div class="a t" style="left:1908.5px;width:80px;text-align:center;top:413.83px;font-size:16px;line-height:19.2px;color:#1f2631;">1</div>
<div class="a" style="left:357px;top:448.10px;width:1669px;height:51.26px;background:#ffffff;"></div>
<div class="a" style="left:357px;top:498.86px;width:1669px;height:1px;background:#eff0f4;z-index:1"></div>
<div class="a" style="left:357px;top:448.60px;width:3px;height:50.26px;background:#2d1b80"></div>
<div class="a" style="left:1145px;top:448.10px;width:1px;height:51.26px;background:#eeeff3"></div>
<div class="a" style="left:1227px;top:448.10px;width:1px;height:51.26px;background:#eeeff3"></div>
<div class="a" style="left:1374px;top:448.10px;width:1px;height:51.26px;background:#eeeff3"></div>
<div class="a" style="left:1543px;top:448.10px;width:1px;height:51.26px;background:#eeeff3"></div>
<div class="a" style="left:1721px;top:448.10px;width:1px;height:51.26px;background:#eeeff3"></div>
<div class="a" style="left:1873px;top:448.10px;width:1px;height:51.26px;background:#eeeff3"></div>
<div class="a" style="left:371.5px;top:465.23px;width:17px;height:17px;border:2px solid #1f2631;border-radius:2px"></div>
<svg style="left:405.5px;top:469.73px" width="7" height="8" viewBox="0 0 7 8" fill="none" stroke="#1f2631" stroke-width="1.4" stroke-linecap="round" stroke-linejoin="round"><path d="M2 1.2 L5 4 L2 6.8"/></svg>
<div class="a t" style="left:428px;top:465.59px;font-size:16px;line-height:19.2px;color:#1f2631;letter-spacing:0.12px;">bar stools</div>
<svg style="left:1175px;top:468.23px" width="21" height="11" viewBox="0 0 21 11" fill="none" stroke="#1b74d8" stroke-width="2" stroke-linecap="round"><path d="M8 1.2 H5.3 A4.3 4.3 0 0 0 5.3 9.8 H8"/><path d="M13 1.2 H15.7 A4.3 4.3 0 0 1 15.7 9.8 H13"/><path d="M6.8 5.5 H14.2"/></svg>
<div class="a t" style="left:1225.5px;width:120px;text-align:right;top:465.59px;font-size:16px;line-height:19.2px;color:#1f2631;">246K</div>
<svg style="left:1387.5px;top:463.73px" width="21" height="20" viewBox="0.4 0.2 23.2 22"><path fill="#1b74d8" d="M12 0.8 L15.1 8 L23 8.6 L17 13.8 L18.9 21.6 L12 17.4 L5.1 21.6 L7 13.8 L1 8.6 L8.9 8 Z"/></svg>
<div class="a t" style="left:1561px;width:120px;text-align:right;top:465.59px;font-size:16px;line-height:19.2px;color:#1f2631;">80K</div>
<div class="a" style="left:1726.5px;top:452.80px;width:141.5px;height:41.86px;border-radius:5px;background:#e7f9ed"></div>
<div class="a t" style="left:1757.0px;width:80px;text-align:center;top:465.09px;font-size:16px;line-height:19.2px;color:#1f2631;">5</div>
<div class="a" style="left:1879px;top:452.80px;width:141px;height:41.86px;border-radius:5px;background:#e7f9ed"></div>
<div class="a t" style="left:1890.0px;width:120px;text-align:center;top:465.09px;font-size:16px;line-height:19.2px;color:#1f2631;">1<svg style="position:relative;display:inline-block;margin:0 3px 0 6.5px;vertical-align:1.5px" width="8.6" height="6" viewBox="0 0 8.6 6"><path d="M0.2 4.6 L4.3 0.6 L8.4 4.6 L6.6 5.6 L4.3 3.4 L2 5.6 Z" fill="#1f8a4c" stroke="#1f8a4c" stroke-width="0.6" stroke-linejoin="round"/></svg><span style="color:#1f8a4c;font-size:13.5px;-webkit-text-stroke:0.3px #1f8a4c">4</span></div>
<div class="a" style="left:357px;top:499.36px;width:1669px;height:51.26px;background:#f9f9fb;"></div>
<div class="a" style="left:357px;top:550.12px;width:1669px;height:1px;background:#eff0f4;z-index:1"></div>
<div class="a" style="left:357px;top:499.86px;width:3px;height:50.26px;background:#2f8a19"></div>
<div class="a" style="left:1145px;top:499.36px;width:1px;height:51.26px;background:#eeeff3"></div>
<div class="a" style="left:1227px;top:499.36px;width:1px;height:51.26px;background:#eeeff3"></div>
<div class="a" style="left:1374px;top:499.36px;width:1px;height:51.26px;background:#eeeff3"></div>
<div class="a" style="left:1543px;top:499.36px;width:1px;height:51.26px;background:#eeeff3"></div>
<div class="a" style="left:1721px;top:499.36px;width:1px;height:51.26px;background:#eeeff3"></div>
<div class="a" style="left:1873px;top:499.36px;width:1px;height:51.26px;background:#eeeff3"></div>
<div class="a" style="left:371.5px;top:516.49px;width:17px;height:17px;border:2px solid #1f2631;border-radius:2px"></div>
<svg style="left:405.5px;top:520.99px" width="7" height="8" viewBox="0 0 7 8" fill="none" stroke="#1f2631" stroke-width="1.4" stroke-linecap="round" stroke-linejoin="round"><path d="M2 1.2 L5 4 L2 6.8"/></svg>
<div class="a t" style="left:428px;top:516.85px;font-size:16px;line-height:19.2px;color:#1f2631;letter-spacing:0.5px;">outdoor furnitures</div>
<svg style="left:1175px;top:519.49px" width="21" height="11" viewBox="0 0 21 11" fill="none" stroke="#1b74d8" stroke-width="2" stroke-linecap="round"><path d="M8 1.2 H5.3 A4.3 4.3 0 0 0 5.3 9.8 H8"/><path d="M13 1.2 H15.7 A4.3 4.3 0 0 1 15.7 9.8 H13"/><path d="M6.8 5.5 H14.2"/></svg>
<div class="a t" style="left:1225.5px;width:120px;text-align:right;top:516.85px;font-size:16px;line-height:19.2px;color:#1f2631;">368K</div>
<svg style="left:1387.5px;top:514.99px" width="21" height="20" viewBox="0.4 0.2 23.2 22"><path fill="#1b74d8" d="M12 0.8 L15.1 8 L23 8.6 L17 13.8 L18.9 21.6 L12 17.4 L5.1 21.6 L7 13.8 L1 8.6 L8.9 8 Z"/></svg>
<svg style="left:1421.5px;top:515.49px" width="14" height="19" viewBox="0 0 14 19"><path fill="#b1b0c3" d="M7 0.3 A6.7 6.7 0 0 1 13.7 7 C13.7 10.8 10 14.5 7 18.8 C4 14.5 0.3 10.8 0.3 7 A6.7 6.7 0 0 1 7 0.3 Z"/><circle cx="7" cy="6.8" r="2.2" fill="#fff"/></svg>
<svg style="left:1449.0px;top:518.49px" width="19" height="13" viewBox="0 0 19 13"><rect width="19" height="13" rx="3.5" fill="#b1b0c3"/><path d="M7.3 3.5 L12.5 6.5 L7.3 9.5 Z" fill="#fff"/></svg>
<svg style="left:1480.0px;top:517.99px" width="17" height="14" viewBox="0 0 17 14" fill="#b1b0c3"><rect y="0" width="17" height="2"/><rect y="4" width="17" height="2"/><rect y="8" width="17" height="2"/><rect y="12" width="17" height="2"/></svg>
<svg style="left:1508.0px;top:514.49px" width="21" height="21" viewBox="0 0 21 21" fill="none" stroke="#b1b0c3" stroke-width="1.5"><rect x="5" y="0.75" width="15.25" height="15.25" rx="1"/><path d="M0.75 4.5 V20.25 H17"/><path d="M7.5 13 L10 10 L11.5 11.8 L13.5 9.5 L16.5 13 Z" fill="#b1b0c3" stroke="none"/></svg>
<div class="a t" style="left:1561px;width:120px;text-align:right;top:516.85px;font-size:16px;line-height:19.2px;color:#1f2631;">64.8K</div>
<div class="a" style="left:1726.5px;top:504.06px;width:141.5px;height:41.86px;border-radius:5px;background:#e7f9ed"></div>
<div class="a t" style="left:1757.0px;width:80px;text-align:center;top:516.35px;font-size:16px;line-height:19.2px;color:#1f2631;">2</div>
<div class="a" style="left:1879px;top:504.06px;width:141px;height:41.86px;border-radius:5px;background:#e7f9ed"></div>
<div class="a t" style="left:1908.5px;width:80px;text-align:center;top:516.35px;font-size:16px;line-height:19.2px;color:#1f2631;">2</div>
<div class="a" style="left:357px;top:550.62px;width:1669px;height:51.26px;background:#ffffff;"></div>
<div class="a" style="left:357px;top:601.38px;width:1669px;height:1px;background:#eff0f4;z-index:1"></div>
<div class="a" style="left:357px;top:551.12px;width:3px;height:50.26px;background:#2d1b80"></div>
<div class="a" style="left:1145px;top:550.62px;width:1px;height:51.26px;background:#eeeff3"></div>
<div class="a" style="left:1227px;top:550.62px;width:1px;height:51.26px;background:#eeeff3"></div>
<div class="a" style="left:1374px;top:550.62px;width:1px;height:51.26px;background:#eeeff3"></div>
<div class="a" style="left:1543px;top:550.62px;width:1px;height:51.26px;background:#eeeff3"></div>
<div class="a" style="left:1721px;top:550.62px;width:1px;height:51.26px;background:#eeeff3"></div>
<div class="a" style="left:1873px;top:550.62px;width:1px;height:51.26px;background:#eeeff3"></div>
<div class="a" style="left:371.5px;top:567.75px;width:17px;height:17px;border:2px solid #1f2631;border-radius:2px"></div>
<svg style="left:405.5px;top:572.25px" width="7" height="8" viewBox="0 0 7 8" fill="none" stroke="#1f2631" stroke-width="1.4" stroke-linecap="round" stroke-linejoin="round"><path d="M2 1.2 L5 4 L2 6.8"/></svg>
<div class="a t" style="left:428px;top:568.11px;font-size:16px;line-height:19.2px;color:#1f2631;letter-spacing:0.06px;">bars stool</div>
<svg style="left:1175px;top:570.75px" width="21" height="11" viewBox="0 0 21 11" fill="none" stroke="#1b74d8" stroke-width="2" stroke-linecap="round"><path d="M8 1.2 H5.3 A4.3 4.3 0 0 0 5.3 9.8 H8"/><path d="M13 1.2 H15.7 A4.3 4.3 0 0 1 15.7 9.8 H13"/><path d="M6.8 5.5 H14.2"/></svg>
<div class="a t" style="left:1225.5px;width:120px;text-align:right;top:568.11px;font-size:16px;line-height:19.2px;color:#1f2631;">450K</div>
<svg style="left:1387.5px;top:566.25px" width="21" height="20" viewBox="0.4 0.2 23.2 22"><path fill="#1b74d8" d="M12 0.8 L15.1 8 L23 8.6 L17 13.8 L18.9 21.6 L12 17.4 L5.1 21.6 L7 13.8 L1 8.6 L8.9 8 Z"/></svg>
<svg style="left:1419.0px;top:569.75px" width="19" height="13" viewBox="0 0 19 13"><rect width="19" height="13" rx="3.5" fill="#b1b0c3"/><path d="M7.3 3.5 L12.5 6.5 L7.3 9.5 Z" fill="#fff"/></svg>
<svg style="left:1450.0px;top:569.25px" width="17" height="14" viewBox="0 0 17 14" fill="#b1b0c3"><rect y="0" width="17" height="2"/><rect y="4" width="17" height="2"/><rect y="8" width="17" height="2"/><rect y="12" width="17" height="2"/></svg>
<div class="a t" style="left:1561px;width:120px;text-align:right;top:568.11px;font-size:16px;line-height:19.2px;color:#1f2631;">51.3K</div>
<div class="a" style="left:1726.5px;top:555.32px;width:141.5px;height:41.86px;border-radius:5px;background:#e7f9ed"></div>
<div class="a t" style="left:1757.0px;width:80px;text-align:center;top:567.61px;font-size:16px;line-height:19.2px;color:#1f2631;">3</div>
<div class="a" style="left:1879px;top:555.32px;width:141px;height:41.86px;border-radius:5px;background:#e7f9ed"></div>
<div class="a t" style="left:1908.5px;width:80px;text-align:center;top:567.61px;font-size:16px;line-height:19.2px;color:#1f2631;">3</div>
<div class="a" style="left:357px;top:601.88px;width:1669px;height:51.26px;background:#f9f9fb;"></div>
<div class="a" style="left:357px;top:652.64px;width:1669px;height:1px;background:#eff0f4;z-index:1"></div>
<div class="a" style="left:357px;top:602.38px;width:3px;height:50.26px;background:#c9557b"></div>
<div class="a" style="left:1145px;top:601.88px;width:1px;height:51.26px;background:#eeeff3"></div>
<div class="a" style="left:1227px;top:601.88px;width:1px;height:51.26px;background:#eeeff3"></div>
<div class="a" style="left:1374px;top:601.88px;width:1px;height:51.26px;background:#eeeff3"></div>
<div class="a" style="left:1543px;top:601.88px;width:1px;height:51.26px;background:#eeeff3"></div>
<div class="a" style="left:1721px;top:601.88px;width:1px;height:51.26px;background:#eeeff3"></div>
<div class="a" style="left:1873px;top:601.88px;width:1px;height:51.26px;background:#eeeff3"></div>
<div class="a" style="left:371.5px;top:619.01px;width:17px;height:17px;border:2px solid #1f2631;border-radius:2px"></div>
<svg style="left:405.5px;top:623.51px" width="7" height="8" viewBox="0 0 7 8" fill="none" stroke="#1f2631" stroke-width="1.4" stroke-linecap="round" stroke-linejoin="round"><path d="M2 1.2 L5 4 L2 6.8"/></svg>
<div class="a t" style="left:428px;top:619.37px;font-size:16px;line-height:19.2px;color:#1f2631;letter-spacing:0.08px;">sofa</div>
<svg style="left:1175px;top:622.01px" width="21" height="11" viewBox="0 0 21 11" fill="none" stroke="#1b74d8" stroke-width="2" stroke-linecap="round"><path d="M8 1.2 H5.3 A4.3 4.3 0 0 0 5.3 9.8 H8"/><path d="M13 1.2 H15.7 A4.3 4.3 0 0 1 15.7 9.8 H13"/><path d="M6.8 5.5 H14.2"/></svg>
<div class="a t" style="left:1225.5px;width:120px;text-align:right;top:619.37px;font-size:16px;line-height:19.2px;color:#1f2631;">246K</div>
<svg style="left:1387.5px;top:617.51px" width="21" height="20" viewBox="0.4 0.2 23.2 22"><path fill="#b1b0c3" d="M12 0.8 L15.1 8 L23 8.6 L17 13.8 L18.9 21.6 L12 17.4 L5.1 21.6 L7 13.8 L1 8.6 L8.9 8 Z"/></svg>
<svg style="left:1417.5px;top:617.51px" width="22" height="20" viewBox="0 0 22 20"><path d="M6 8.5 L11 2 L16 8.5" fill="none" stroke="#b1b0c3" stroke-width="1.8" stroke-linejoin="round"/><path fill="#b1b0c3" d="M0.5 7.3 H21.5 L18.7 18.8 H3.3 Z"/><circle cx="11" cy="12.8" r="1.8" fill="#fff"/></svg>
<div class="a t" style="left:1561px;width:120px;text-align:right;top:619.37px;font-size:16px;line-height:19.2px;color:#1f2631;">19.9K</div>
<div class="a" style="left:1726.5px;top:606.58px;width:141.5px;height:41.86px;border-radius:5px;background:#e7f9ed"></div>
<div class="a t" style="left:1757.0px;width:80px;text-align:center;top:618.87px;font-size:16px;line-height:19.2px;color:#1f2631;">3</div>
<div class="a" style="left:1879px;top:606.58px;width:141px;height:41.86px;border-radius:5px;background:#e7f9ed"></div>
<div class="a t" style="left:1890.0px;width:120px;text-align:center;top:618.87px;font-size:16px;line-height:19.2px;color:#1f2631;">4<svg style="position:relative;display:inline-block;margin:0 3px 0 6.5px;vertical-align:1.5px" width="8.6" height="6" viewBox="0 0 8.6 6"><path d="M0.2 1.4 L4.3 5.4 L8.4 1.4 L6.6 0.4 L4.3 2.6 L2 0.4 Z" fill="#d8232f" stroke="#d8232f" stroke-width="0.6" stroke-linejoin="round"/></svg><span style="color:#d8232f;font-size:13.5px;-webkit-text-stroke:0.3px #d8232f">1</span></div>
<div class="a" style="left:357px;top:653.14px;width:1669px;height:51.26px;background:#ffffff;"></div>
<div class="a" style="left:357px;top:703.90px;width:1669px;height:1px;background:#eff0f4;z-index:1"></div>
<div class="a" style="left:357px;top:653.64px;width:3px;height:50.26px;background:#1e2a36"></div>
<div class="a" style="left:1145px;top:653.14px;width:1px;height:51.26px;background:#eeeff3"></div>
<div class="a" style="left:1227px;top:653.14px;width:1px;height:51.26px;background:#eeeff3"></div>
<div class="a" style="left:1374px;top:653.14px;width:1px;height:51.26px;background:#eeeff3"></div>
<div class="a" style="left:1543px;top:653.14px;width:1px;height:51.26px;background:#eeeff3"></div>
<div class="a" style="left:1721px;top:653.14px;width:1px;height:51.26px;background:#eeeff3"></div>
<div class="a" style="left:1873px;top:653.14px;width:1px;height:51.26px;background:#eeeff3"></div>
<div class="a" style="left:371.5px;top:670.27px;width:17px;height:17px;border:2px solid #1f2631;border-radius:2px"></div>
<svg style="left:405.5px;top:674.77px" width="7" height="8" viewBox="0 0 7 8" fill="none" stroke="#1f2631" stroke-width="1.4" stroke-linecap="round" stroke-linejoin="round"><path d="M2 1.2 L5 4 L2 6.8"/></svg>
<div class="a t" style="left:428px;top:670.63px;font-size:16px;line-height:19.2px;color:#1f2631;letter-spacing:-0.1px;">shoe storage</div>
<svg style="left:1175px;top:673.27px" width="21" height="11" viewBox="0 0 21 11" fill="none" stroke="#1b74d8" stroke-width="2" stroke-linecap="round"><path d="M8 1.2 H5.3 A4.3 4.3 0 0 0 5.3 9.8 H8"/><path d="M13 1.2 H15.7 A4.3 4.3 0 0 1 15.7 9.8 H13"/><path d="M6.8 5.5 H14.2"/></svg>
<div class="a t" style="left:1225.5px;width:120px;text-align:right;top:670.63px;font-size:16px;line-height:19.2px;color:#1f2631;">60.5K</div>
<svg style="left:1387.5px;top:668.77px" width="21" height="20" viewBox="0.4 0.2 23.2 22"><path fill="#1b74d8" d="M12 0.8 L15.1 8 L23 8.6 L17 13.8 L18.9 21.6 L12 17.4 L5.1 21.6 L7 13.8 L1 8.6 L8.9 8 Z"/></svg>
<svg style="left:1419.0px;top:672.27px" width="19" height="13" viewBox="0 0 19 13"><rect width="19" height="13" rx="3.5" fill="#b1b0c3"/><path d="M7.3 3.5 L12.5 6.5 L7.3 9.5 Z" fill="#fff"/></svg>
<svg style="left:1448.0px;top:668.27px" width="21" height="21" viewBox="0 0 21 21" fill="none" stroke="#b1b0c3" stroke-width="1.5"><rect x="5" y="0.75" width="15.25" height="15.25" rx="1"/><path d="M0.75 4.5 V20.25 H17"/><path d="M7.5 13 L10 10 L11.5 11.8 L13.5 9.5 L16.5 13 Z" fill="#b1b0c3" stroke="none"/></svg>
<div class="a t" style="left:1561px;width:120px;text-align:right;top:670.63px;font-size:16px;line-height:19.2px;color:#1f2631;">19.7K</div>
<div class="a" style="left:1726.5px;top:657.84px;width:141.5px;height:41.86px;border-radius:5px;background:#e7f9ed"></div>
<div class="a t" style="left:1757.0px;width:80px;text-align:center;top:670.13px;font-size:16px;line-height:19.2px;color:#1f2631;">2</div>
<div class="a" style="left:1879px;top:657.84px;width:141px;height:41.86px;border-radius:5px;background:#e7f9ed"></div>
<div class="a t" style="left:1890.0px;width:120px;text-align:center;top:670.13px;font-size:16px;line-height:19.2px;color:#1f2631;">1<svg style="position:relative;display:inline-block;margin:0 3px 0 6.5px;vertical-align:1.5px" width="8.6" height="6" viewBox="0 0 8.6 6"><path d="M0.2 4.6 L4.3 0.6 L8.4 4.6 L6.6 5.6 L4.3 3.4 L2 5.6 Z" fill="#1f8a4c" stroke="#1f8a4c" stroke-width="0.6" stroke-linejoin="round"/></svg><span style="color:#1f8a4c;font-size:13.5px;-webkit-text-stroke:0.3px #1f8a4c">1</span></div>
<div class="a" style="left:357px;top:704.40px;width:1669px;height:51.26px;background:#f9f9fb;"></div>
<div class="a" style="left:357px;top:755.16px;width:1669px;height:1px;background:#eff0f4;z-index:1"></div>
<div class="a" style="left:357px;top:704.90px;width:3px;height:50.26px;background:#6b23f0"></div>
<div class="a" style="left:1145px;top:704.40px;width:1px;height:51.26px;background:#eeeff3"></div>
<div class="a" style="left:1227px;top:704.40px;width:1px;height:51.26px;background:#eeeff3"></div>
<div class="a" style="left:1374px;top:704.40px;width:1px;height:51.26px;background:#eeeff3"></div>
<div class="a" style="left:1543px;top:704.40px;width:1px;height:51.26px;background:#eeeff3"></div>
<div class="a" style="left:1721px;top:704.40px;width:1px;height:51.26px;background:#eeeff3"></div>
<div class="a" style="left:1873px;top:704.40px;width:1px;height:51.26px;background:#eeeff3"></div>
<div class="a" style="left:371.5px;top:721.53px;width:17px;height:17px;border:2px solid #1f2631;border-radius:2px"></div>
<svg style="left:405.5px;top:726.03px" width="7" height="8" viewBox="0 0 7 8" fill="none" stroke="#1f2631" stroke-width="1.4" stroke-linecap="round" stroke-linejoin="round"><path d="M2 1.2 L5 4 L2 6.8"/></svg>
<div class="a t" style="left:428px;top:721.89px;font-size:16px;line-height:19.2px;color:#1f2631;letter-spacing:0.05px;">computer desks</div>
<svg style="left:1175px;top:724.53px" width="21" height="11" viewBox="0 0 21 11" fill="none" stroke="#1b74d8" stroke-width="2" stroke-linecap="round"><path d="M8 1.2 H5.3 A4.3 4.3 0 0 0 5.3 9.8 H8"/><path d="M13 1.2 H15.7 A4.3 4.3 0 0 1 15.7 9.8 H13"/><path d="M6.8 5.5 H14.2"/></svg>
<div class="a t" style="left:1225.5px;width:120px;text-align:right;top:721.89px;font-size:16px;line-height:19.2px;color:#1f2631;">135K</div>
<svg style="left:1387.5px;top:720.0300000000001px" width="21" height="20" viewBox="0.4 0.2 23.2 22"><path fill="#1b74d8" d="M12 0.8 L15.1 8 L23 8.6 L17 13.8 L18.9 21.6 L12 17.4 L5.1 21.6 L7 13.8 L1 8.6 L8.9 8 Z"/></svg>
<div class="a t" style="left:1561px;width:120px;text-align:right;top:721.89px;font-size:16px;line-height:19.2px;color:#1f2631;">8.2K</div>
<div class="a" style="left:1726.5px;top:709.10px;width:141.5px;height:41.86px;border-radius:5px;background:#e7f9ed"></div>
<div class="a t" style="left:1757.0px;width:80px;text-align:center;top:721.39px;font-size:16px;line-height:19.2px;color:#1f2631;">4</div>
<div class="a" style="left:1879px;top:709.10px;width:141px;height:41.86px;border-radius:5px;background:#e7f9ed"></div>
<div class="a t" style="left:1890.0px;width:120px;text-align:center;top:721.39px;font-size:16px;line-height:19.2px;color:#1f2631;">5<svg style="position:relative;display:inline-block;margin:0 3px 0 6.5px;vertical-align:1.5px" width="8.6" height="6" viewBox="0 0 8.6 6"><path d="M0.2 1.4 L4.3 5.4 L8.4 1.4 L6.6 0.4 L4.3 2.6 L2 0.4 Z" fill="#d8232f" stroke="#d8232f" stroke-width="0.6" stroke-linejoin="round"/></svg><span style="color:#d8232f;font-size:13.5px;-webkit-text-stroke:0.3px #d8232f">1</span></div>
<div class="a" style="left:357px;top:755.66px;width:1669px;height:51.26px;background:#ffffff;"></div>
<div class="a" style="left:357px;top:806.42px;width:1669px;height:1px;background:#eff0f4;z-index:1"></div>
<div class="a" style="left:357px;top:756.16px;width:3px;height:50.26px;background:#73c76d"></div>
<div class="a" style="left:1145px;top:755.66px;width:1px;height:51.26px;background:#eeeff3"></div>
<div class="a" style="left:1227px;top:755.66px;width:1px;height:51.26px;background:#eeeff3"></div>
<div class="a" style="left:1374px;top:755.66px;width:1px;height:51.26px;background:#eeeff3"></div>
<div class="a" style="left:1543px;top:755.66px;width:1px;height:51.26px;background:#eeeff3"></div>
<div class="a" style="left:1721px;top:755.66px;width:1px;height:51.26px;background:#eeeff3"></div>
<div class="a" style="left:1873px;top:755.66px;width:1px;height:51.26px;background:#eeeff3"></div>
<div class="a" style="left:371.5px;top:772.79px;width:17px;height:17px;border:2px solid #1f2631;border-radius:2px"></div>
<svg style="left:405.5px;top:777.29px" width="7" height="8" viewBox="0 0 7 8" fill="none" stroke="#1f2631" stroke-width="1.4" stroke-linecap="round" stroke-linejoin="round"><path d="M2 1.2 L5 4 L2 6.8"/></svg>
<div class="a t" style="left:428px;top:773.15px;font-size:16px;line-height:19.2px;color:#1f2631;letter-spacing:0.17px;">stand tv</div>
<svg style="left:1175px;top:775.79px" width="21" height="11" viewBox="0 0 21 11" fill="none" stroke="#1b74d8" stroke-width="2" stroke-linecap="round"><path d="M8 1.2 H5.3 A4.3 4.3 0 0 0 5.3 9.8 H8"/><path d="M13 1.2 H15.7 A4.3 4.3 0 0 1 15.7 9.8 H13"/><path d="M6.8 5.5 H14.2"/></svg>
<div class="a t" style="left:1225.5px;width:120px;text-align:right;top:773.15px;font-size:16px;line-height:19.2px;color:#1f2631;">3.6K</div>
<svg style="left:1387.5px;top:771.2900000000001px" width="21" height="20" viewBox="0.4 0.2 23.2 22"><path fill="#1b74d8" d="M12 0.8 L15.1 8 L23 8.6 L17 13.8 L18.9 21.6 L12 17.4 L5.1 21.6 L7 13.8 L1 8.6 L8.9 8 Z"/></svg>
<svg style="left:1420.0px;top:774.2900000000001px" width="17" height="14" viewBox="0 0 17 14" fill="#b1b0c3"><rect y="0" width="17" height="2"/><rect y="4" width="17" height="2"/><rect y="8" width="17" height="2"/><rect y="12" width="17" height="2"/></svg>
<svg style="left:1448.0px;top:770.7900000000001px" width="21" height="21" viewBox="0 0 21 21" fill="none" stroke="#b1b0c3" stroke-width="1.5"><rect x="5" y="0.75" width="15.25" height="15.25" rx="1"/><path d="M0.75 4.5 V20.25 H17"/><path d="M7.5 13 L10 10 L11.5 11.8 L13.5 9.5 L16.5 13 Z" fill="#b1b0c3" stroke="none"/></svg>
<div class="a t" style="left:1561px;width:120px;text-align:right;top:773.15px;font-size:16px;line-height:19.2px;color:#1f2631;">410.4</div>
<div class="a" style="left:1726.5px;top:760.36px;width:141.5px;height:41.86px;border-radius:5px;background:#e7f9ed"></div>
<div class="a t" style="left:1757.0px;width:80px;text-align:center;top:772.65px;font-size:16px;line-height:19.2px;color:#1f2631;">1</div>
<div class="a" style="left:1879px;top:760.36px;width:141px;height:41.86px;border-radius:5px;background:#e7f9ed"></div>
<div class="a t" style="left:1890.0px;width:120px;text-align:center;top:772.65px;font-size:16px;line-height:19.2px;color:#1f2631;">3<svg style="position:relative;display:inline-block;margin:0 3px 0 6.5px;vertical-align:1.5px" width="8.6" height="6" viewBox="0 0 8.6 6"><path d="M0.2 1.4 L4.3 5.4 L8.4 1.4 L6.6 0.4 L4.3 2.6 L2 0.4 Z" fill="#d8232f" stroke="#d8232f" stroke-width="0.6" stroke-linejoin="round"/></svg><span style="color:#d8232f;font-size:13.5px;-webkit-text-stroke:0.3px #d8232f">2</span></div>
<div class="a" style="left:357px;top:806.92px;width:1669px;height:51.26px;background:#f9f9fb;"></div>
<div class="a" style="left:357px;top:857.68px;width:1669px;height:1px;background:#eff0f4;z-index:1"></div>
<div class="a" style="left:357px;top:807.42px;width:3px;height:50.26px;background:#a00d3b"></div>
<div class="a" style="left:1145px;top:806.92px;width:1px;height:51.26px;background:#eeeff3"></div>
<div class="a" style="left:1227px;top:806.92px;width:1px;height:51.26px;background:#eeeff3"></div>
<div class="a" style="left:1374px;top:806.92px;width:1px;height:51.26px;background:#eeeff3"></div>
<div class="a" style="left:1543px;top:806.92px;width:1px;height:51.26px;background:#eeeff3"></div>
<div class="a" style="left:1721px;top:806.92px;width:1px;height:51.26px;background:#eeeff3"></div>
<div class="a" style="left:1873px;top:806.92px;width:1px;height:51.26px;background:#eeeff3"></div>
<div class="a" style="left:371.5px;top:824.05px;width:17px;height:17px;border:2px solid #1f2631;border-radius:2px"></div>
<svg style="left:405.5px;top:828.55px" width="7" height="8" viewBox="0 0 7 8" fill="none" stroke="#1f2631" stroke-width="1.4" stroke-linecap="round" stroke-linejoin="round"><path d="M2 1.2 L5 4 L2 6.8"/></svg>
<div class="a t" style="left:428px;top:824.41px;font-size:16px;line-height:19.2px;color:#1f2631;letter-spacing:0.41px;">store furniture</div>
<svg style="left:1175px;top:827.05px" width="21" height="11" viewBox="0 0 21 11" fill="none" stroke="#1b74d8" stroke-width="2" stroke-linecap="round"><path d="M8 1.2 H5.3 A4.3 4.3 0 0 0 5.3 9.8 H8"/><path d="M13 1.2 H15.7 A4.3 4.3 0 0 1 15.7 9.8 H13"/><path d="M6.8 5.5 H14.2"/></svg>
<div class="a t" style="left:1225.5px;width:120px;text-align:right;top:824.41px;font-size:16px;line-height:19.2px;color:#1f2631;">480</div>
<svg style="left:1391.5px;top:823.0500000000001px" width="14" height="19" viewBox="0 0 14 19"><path fill="#b1b0c3" d="M7 0.3 A6.7 6.7 0 0 1 13.7 7 C13.7 10.8 10 14.5 7 18.8 C4 14.5 0.3 10.8 0.3 7 A6.7 6.7 0 0 1 7 0.3 Z"/><circle cx="7" cy="6.8" r="2.2" fill="#fff"/></svg>
<svg style="left:1417.5px;top:822.5500000000001px" width="21" height="20" viewBox="0.4 0.2 23.2 22"><path fill="#b1b0c3" d="M12 0.8 L15.1 8 L23 8.6 L17 13.8 L18.9 21.6 L12 17.4 L5.1 21.6 L7 13.8 L1 8.6 L8.9 8 Z"/></svg>
<svg style="left:1449.0px;top:826.0500000000001px" width="19" height="13" viewBox="0 0 19 13"><rect width="19" height="13" rx="3.5" fill="#b1b0c3"/><path d="M7.3 3.5 L12.5 6.5 L7.3 9.5 Z" fill="#fff"/></svg>
<svg style="left:1478.0px;top:822.0500000000001px" width="21" height="21" viewBox="0 0 21 21" fill="none" stroke="#b1b0c3" stroke-width="1.5"><rect x="5" y="0.75" width="15.25" height="15.25" rx="1"/><path d="M0.75 4.5 V20.25 H17"/><path d="M7.5 13 L10 10 L11.5 11.8 L13.5 9.5 L16.5 13 Z" fill="#b1b0c3" stroke="none"/></svg>
<div class="a t" style="left:1561px;width:120px;text-align:right;top:824.41px;font-size:16px;line-height:19.2px;color:#1f2631;">156</div>
<div class="a" style="left:1726.5px;top:811.62px;width:141.5px;height:41.86px;border-radius:5px;background:#e7f9ed"></div>
<div class="a t" style="left:1757.0px;width:80px;text-align:center;top:823.91px;font-size:16px;line-height:19.2px;color:#1f2631;">1</div>
<div class="a" style="left:1879px;top:811.62px;width:141px;height:41.86px;border-radius:5px;background:#e7f9ed"></div>
<div class="a t" style="left:1908.5px;width:80px;text-align:center;top:823.91px;font-size:16px;line-height:19.2px;color:#1f2631;">1</div>
<div class="a" style="left:357px;top:858.18px;width:1669px;height:49.32px;background:#ffffff;border-radius:0 0 6px 6px;"></div>
<div class="a" style="left:357px;top:858.68px;width:3px;height:44.50px;background:#f07a7d"></div>
<div class="a" style="left:1145px;top:858.18px;width:1px;height:49.32px;background:#eeeff3"></div>
<div class="a" style="left:1227px;top:858.18px;width:1px;height:49.32px;background:#eeeff3"></div>
<div class="a" style="left:1374px;top:858.18px;width:1px;height:49.32px;background:#eeeff3"></div>
<div class="a" style="left:1543px;top:858.18px;width:1px;height:49.32px;background:#eeeff3"></div>
<div class="a" style="left:1721px;top:858.18px;width:1px;height:49.32px;background:#eeeff3"></div>
<div class="a" style="left:1873px;top:858.18px;width:1px;height:49.32px;background:#eeeff3"></div>
<div class="a" style="left:371.5px;top:875.31px;width:17px;height:17px;border:2px solid #1f2631;border-radius:2px"></div>
<svg style="left:405.5px;top:879.81px" width="7" height="8" viewBox="0 0 7 8" fill="none" stroke="#1f2631" stroke-width="1.4" stroke-linecap="round" stroke-linejoin="round"><path d="M2 1.2 L5 4 L2 6.8"/></svg>
<div class="a t" style="left:428px;top:875.67px;font-size:16px;line-height:19.2px;color:#1f2631;letter-spacing:0.08px;">tv stands</div>
<svg style="left:1175px;top:878.31px" width="21" height="11" viewBox="0 0 21 11" fill="none" stroke="#1b74d8" stroke-width="2" stroke-linecap="round"><path d="M8 1.2 H5.3 A4.3 4.3 0 0 0 5.3 9.8 H8"/><path d="M13 1.2 H15.7 A4.3 4.3 0 0 1 15.7 9.8 H13"/><path d="M6.8 5.5 H14.2"/></svg>
<div class="a t" style="left:1225.5px;width:120px;text-align:right;top:875.67px;font-size:16px;line-height:19.2px;color:#1f2631;">1.6K</div>
<svg style="left:1387.5px;top:873.8100000000001px" width="21" height="20" viewBox="0.4 0.2 23.2 22"><path fill="#1b74d8" d="M12 0.8 L15.1 8 L23 8.6 L17 13.8 L18.9 21.6 L12 17.4 L5.1 21.6 L7 13.8 L1 8.6 L8.9 8 Z"/></svg>
<svg style="left:1419.0px;top:877.3100000000001px" width="19" height="13" viewBox="0 0 19 13"><rect width="19" height="13" rx="3.5" fill="#b1b0c3"/><path d="M7.3 3.5 L12.5 6.5 L7.3 9.5 Z" fill="#fff"/></svg>
<div class="a t" style="left:1561px;width:120px;text-align:right;top:875.67px;font-size:16px;line-height:19.2px;color:#1f2631;">16</div>
<div class="a" style="left:1726.5px;top:862.88px;width:141.5px;height:41.86px;border-radius:5px;background:#e7f9ed"></div>
<div class="a t" style="left:1757.0px;width:80px;text-align:center;top:875.17px;font-size:16px;line-height:19.2px;color:#1f2631;">5</div>
<div class="a" style="left:1879px;top:862.88px;width:141px;height:41.86px;border-radius:5px;background:#ffe2e5"></div>
<div class="a t" style="left:1890.0px;width:120px;text-align:center;top:875.17px;font-size:16px;line-height:19.2px;color:#1f2631;">12<svg style="position:relative;display:inline-block;margin:0 3px 0 6.5px;vertical-align:1.5px" width="8.6" height="6" viewBox="0 0 8.6 6"><path d="M0.2 1.4 L4.3 5.4 L8.4 1.4 L6.6 0.4 L4.3 2.6 L2 0.4 Z" fill="#d8232f" stroke="#d8232f" stroke-width="0.6" stroke-linejoin="round"/></svg><span style="color:#d8232f;font-size:13.5px;-webkit-text-stroke:0.3px #d8232f">7</span></div>
<div class="a" style="left:1542.8px;top:139px;width:182.7px;height:52.8px;border:4px solid #ff2200;border-radius:2.5px;z-index:2"></div>
<svg style="left:0;top:0" width="2048" height="989" viewBox="0 0 2048 989"><defs><filter id="sh" x="-20%" y="-20%" width="140%" height="140%"><feDropShadow dx="0.5" dy="1" stdDeviation="0.8" flood-color="#000" flood-opacity="0.25"/></filter></defs><path filter="url(#sh)" fill="#ff2400" d="M1470.6 28.8 L1570.2 106.4 L1560.7 113.9 L1607.5 120.6 L1585 79.3 L1581.2 90.2 L1473.6 24.6 A2.4 2.4 0 0 0 1470.6 28.8 Z"/></svg>
<div class="a" style="left:334px;top:955px;width:1714px;height:34px;background:linear-gradient(#eff0f400,#dfe1e6)"></div>
<div class="a" style="left:357.0px;top:937px;width:7px;height:7px;border-radius:50%;background:#1b74d8"></div>
<div class="a t" style="left:371.5px;top:930.86px;font-size:16px;line-height:19.2px;color:#6b737e;">Entered Top 10</div>
<div class="a" style="left:502.0px;top:937px;width:7px;height:7px;border-radius:50%;background:#ef4f55"></div>
<div class="a t" style="left:516.5px;top:930.86px;font-size:16px;line-height:19.2px;color:#6b737e;">Left Top 10</div>
<div class="a" style="left:620.0px;top:937px;width:7px;height:7px;border-radius:50%;background:#5aa865"></div>
<div class="a t" style="left:634.5px;top:930.86px;font-size:16px;line-height:19.2px;color:#6b737e;">In Top 10</div>
<div class="a" style="left:721.5px;top:937px;width:7px;height:7px;border-radius:50%;background:#c5c8cd"></div>
<div class="a t" style="left:736px;top:930.86px;font-size:16px;line-height:19.2px;color:#6b737e;">Entered Top 100</div>
<div class="a t" style="left:1775.5px;width:150px;text-align:right;top:931.86px;font-size:16px;line-height:19.2px;color:#1f2631;letter-spacing:-0.1px;">View on page:</div>
<div class="a" style="left:1937px;top:920.5px;width:88.5px;height:40.0px;border:2px solid #d5d7e2;border-radius:6px;background:#f8f9fb"></div>
<div class="a t" style="left:1953.5px;top:931.86px;font-size:16px;line-height:19.2px;color:#1f2631;">100</div>
<svg style="left:1993px;top:937.2px" width="10" height="7" viewBox="0 0 10 7" fill="none" stroke="#1f2631" stroke-width="1.6" stroke-linecap="round" stroke-linejoin="round"><path d="M1.5 1.5 L5 5 L8.5 1.5"/></svg>
<div class="a t" style="left:107.5px;top:15.86px;font-size:16px;line-height:19.2px;color:#ffffff;font-weight:bold;letter-spacing:-0.3px;">Projects</div>
<div class="a" style="left:102px;top:54px;width:224px;height:46px;border-radius:7px;background:#fff"></div>
<div class="a" style="left:116px;top:73px;width:19px;height:8px;background:#1d5fb5"></div><div class="a" style="left:117.5px;top:74.3px;width:16px;height:5.5px;border-radius:50%;background:#f2c40f"></div><div class="a" style="left:120px;top:75.5px;width:11px;height:3px;background:#3d6ab0"></div>
<div class="a t" style="left:140.5px;top:67.83px;font-size:15.5px;line-height:18.6px;color:#2b3250;">Ikea</div>
<svg style="left:297px;top:69px" width="10" height="16" viewBox="0 0 10 16" fill="none" stroke="#2b3250" stroke-width="1.5" stroke-linecap="round" stroke-linejoin="round"><path d="M2 5 L5 2 L8 5"/><path d="M2 11 L5 14 L8 11"/></svg>
<svg style="left:112px;top:138.0px" width="18" height="18" viewBox="0 0 18 18" fill="none" stroke="#a0a7b1" stroke-width="1.5" stroke-linecap="round" stroke-linejoin="round"><path d="M1.5 8 L9 1.5 L16.5 8 V16.5 H1.5 Z"/><path d="M6 16.5 V10.5 H12 V16.5"/></svg>
<div class="a t" style="left:139px;top:139.73px;font-size:15.6px;line-height:18.72px;color:#dee1e6;letter-spacing:0.22px;">All Projects</div>
<svg style="left:112px;top:183.5px" width="18" height="18" viewBox="0 0 18 18" fill="none" stroke="#a0a7b1" stroke-width="1.5" stroke-linecap="round" stroke-linejoin="round"><rect x="2" y="2.5" width="5" height="7"/><rect x="2" y="12" width="5" height="3.5"/><rect x="10" y="2.5" width="5" height="3.5"/><rect x="10" y="8.5" width="5" height="7"/></svg>
<div class="a t" style="left:139px;top:184.73px;font-size:15.6px;line-height:18.72px;color:#dee1e6;letter-spacing:0.36px;">Project Overview</div>
<svg style="left:112px;top:229.0px" width="18" height="18" viewBox="0 0 18 18" fill="none" stroke="#a0a7b1" stroke-width="1.5" stroke-linecap="round" stroke-linejoin="round"><path d="M3.5 13.5 V16 M8.5 10 V16 M13.5 4 V16" stroke-width="1.8"/></svg>
<div class="a t" style="left:139px;top:230.23px;font-size:15.6px;line-height:18.72px;color:#dee1e6;letter-spacing:0px;">Rankings</div>
<svg style="left:301px;top:235px" width="12" height="8" viewBox="0 0 12 8" fill="none" stroke="#8c939d" stroke-width="1.5" stroke-linecap="round" stroke-linejoin="round"><path d="M2 6 L6 2 L10 6"/></svg>
<div class="a" style="left:139px;top:276.5px;width:2px;height:2px;background:#8a919b"></div>
<div class="a t" style="left:159.5px;top:269.30px;font-size:15px;line-height:18.0px;color:#dee1e6;">Summary</div>
<div class="a" style="left:139px;top:349px;width:2px;height:2px;background:#8a919b"></div>
<div class="a t" style="left:159.5px;top:341.80px;font-size:15px;line-height:18.0px;color:#dee1e6;">Overall</div>
<div class="a" style="left:139px;top:385px;width:2px;height:2px;background:#8a919b"></div>
<div class="a t" style="left:159.5px;top:377.80px;font-size:15px;line-height:18.0px;color:#dee1e6;">Historical data</div>
<div class="a" style="left:125px;top:295px;width:201px;height:36px;border-radius:5px;background:#566273"></div>
<div class="a" style="left:138px;top:311.5px;width:4.5px;height:4.5px;border-radius:50%;background:#fff"></div>
<div class="a t" style="left:160px;top:305.30px;font-size:15px;line-height:18.0px;color:#f0f2f4;">Detailed</div>
<svg style="left:112px;top:424.5px" width="18" height="18" viewBox="0 0 18 18" fill="none" stroke="#a0a7b1" stroke-width="1.5" stroke-linecap="round" stroke-linejoin="round"><path d="M0.8 9 H4.5 L6.5 3 L10 15 L12.5 9 H17"/></svg>
<div class="a t" style="left:139px;top:425.73px;font-size:15.6px;line-height:18.72px;color:#dee1e6;letter-spacing:0.4px;">Analytics &amp; Traffic</div>
<svg style="left:301px;top:430px" width="12" height="8" viewBox="0 0 12 8" fill="none" stroke="#8c939d" stroke-width="1.5" stroke-linecap="round" stroke-linejoin="round"><path d="M2 2 L6 6 L10 2"/></svg>
<svg style="left:112px;top:470.5px" width="18" height="18" viewBox="0 0 18 18" fill="none" stroke="#a0a7b1" stroke-width="1.5" stroke-linecap="round" stroke-linejoin="round"><circle cx="9" cy="6" r="2.3"/><path d="M4.5 16 V15 A4.5 4.5 0 0 1 13.5 15 V16"/><circle cx="3.2" cy="3.6" r="1.5"/><circle cx="14.8" cy="3.6" r="1.5"/><path d="M1 12.5 A3 3 0 0 1 2.5 9"/><path d="M17 12.5 A3 3 0 0 0 15.5 9"/></svg>
<div class="a t" style="left:139px;top:471.73px;font-size:15.6px;line-height:18.72px;color:#dee1e6;letter-spacing:0.58px;">My Competitors</div>
<svg style="left:301px;top:476px" width="12" height="8" viewBox="0 0 12 8" fill="none" stroke="#8c939d" stroke-width="1.5" stroke-linecap="round" stroke-linejoin="round"><path d="M2 2 L6 6 L10 2"/></svg>
<svg style="left:112px;top:525.0px" width="18" height="18" viewBox="0 0 18 18" fill="none" stroke="#a0a7b1" stroke-width="1.5" stroke-linecap="round" stroke-linejoin="round"><path d="M9 1.5 C11 1.5 12 3.5 12 6 C14.5 6 16.5 7 16.5 9 C16.5 11 14.5 12 12 12 C12 14.5 11 16.5 9 16.5 C7 16.5 6 14.5 6 12 C3.5 12 1.5 11 1.5 9 C1.5 7 3.5 6 6 6 C6 3.5 7 1.5 9 1.5 Z"/><path d="M9 6 L10 8 L12 9 L10 10 L9 12 L8 10 L6 9 L8 8 Z" stroke-width="1.2"/></svg>
<div class="a t" style="left:139px;top:517.23px;font-size:15.6px;line-height:18.72px;color:#dee1e6;letter-spacing:-0.1px;">AI Results</div>
<div class="a t" style="left:139px;top:536.03px;font-size:15.6px;line-height:18.72px;color:#dee1e6;letter-spacing:0.19px;">Tracker</div>
<div class="a" style="left:251px;top:523px;width:38px;height:23px;border-radius:5px;background:#e9effb"></div>
<div class="a t" style="left:251.0px;width:38px;text-align:center;top:529.12px;font-size:11.5px;line-height:13.8px;color:#1e6fd6;font-weight:bold;">Beta</div>
<svg style="left:301px;top:530px" width="12" height="8" viewBox="0 0 12 8" fill="none" stroke="#8c939d" stroke-width="1.5" stroke-linecap="round" stroke-linejoin="round"><path d="M2 2 L6 6 L10 2"/></svg>
<svg style="left:112px;top:580.0px" width="18" height="18" viewBox="0 0 18 18" fill="none" stroke="#a0a7b1" stroke-width="1.5" stroke-linecap="round" stroke-linejoin="round"><path d="M1.5 14.5 L6 9.5 L9 12 L15 6" /><path d="M12 2 V5 M10.5 3.5 H13.5" stroke-width="1.2"/><path d="M5 3.5 V5.5 M4 4.5 H6" stroke-width="1.1"/></svg>
<div class="a t" style="left:139px;top:581.23px;font-size:15.6px;line-height:18.72px;color:#dee1e6;letter-spacing:0.23px;">Insights</div>
<svg style="left:112px;top:625.5px" width="18" height="18" viewBox="0 0 18 18" fill="none" stroke="#a0a7b1" stroke-width="1.5" stroke-linecap="round" stroke-linejoin="round"><path d="M4 5.5 L6.5 8 L11.5 1.5"/><path d="M3 11 H14 M3 14.5 H11"/></svg>
<div class="a t" style="left:139px;top:626.73px;font-size:15.6px;line-height:18.72px;color:#dee1e6;letter-spacing:0.31px;">Marketing Plan</div>
<svg style="left:112px;top:671.0px" width="18" height="18" viewBox="0 0 18 18" fill="none" stroke="#a0a7b1" stroke-width="1.5" stroke-linecap="round" stroke-linejoin="round"><rect x="2" y="1.5" width="14" height="15" rx="1.5"/><circle cx="8.5" cy="8" r="3"/><path d="M10.8 10.3 L13 12.5"/></svg>
<div class="a t" style="left:139px;top:672.23px;font-size:15.6px;line-height:18.72px;color:#dee1e6;letter-spacing:0.45px;">Website Audit</div>
<svg style="left:301px;top:676.5px" width="12" height="8" viewBox="0 0 12 8" fill="none" stroke="#8c939d" stroke-width="1.5" stroke-linecap="round" stroke-linejoin="round"><path d="M2 2 L6 6 L10 2"/></svg>
<svg style="left:112px;top:716.5px" width="18" height="18" viewBox="0 0 18 18" fill="none" stroke="#a0a7b1" stroke-width="1.5" stroke-linecap="round" stroke-linejoin="round"><path d="M6.5 2 H3 A1 1 0 0 0 2 3 V15 A1 1 0 0 0 3 16 H6.5"/><path d="M11.5 2 H15 A1 1 0 0 1 16 3 V15 A1 1 0 0 1 15 16 H11.5"/><path d="M9 1 V17"/></svg>
<div class="a t" style="left:139px;top:717.73px;font-size:15.6px;line-height:18.72px;color:#dee1e6;letter-spacing:0.15px;">Page Changes Monitor</div>
<svg style="left:112px;top:762.0px" width="18" height="18" viewBox="0 0 18 18" fill="none" stroke="#a0a7b1" stroke-width="1.5" stroke-linecap="round" stroke-linejoin="round"><path d="M7 5 H5 A4 4 0 0 0 5 13 H7"/><path d="M11 5 H13 A4 4 0 0 1 13 13 H11"/><path d="M5.5 9 H12.5"/></svg>
<div class="a t" style="left:139px;top:763.23px;font-size:15.6px;line-height:18.72px;color:#dee1e6;letter-spacing:0.59px;">Backlink Monitor</div>
<svg style="left:301px;top:767.5px" width="12" height="8" viewBox="0 0 12 8" fill="none" stroke="#8c939d" stroke-width="1.5" stroke-linecap="round" stroke-linejoin="round"><path d="M2 2 L6 6 L10 2"/></svg>
<div class="a" style="left:321.5px;top:10.2px;width:27px;height:27px;border-radius:50%;background:#252e3a;border:1px solid #3b4553"></div>
<svg style="left:330px;top:18px" width="10" height="12" viewBox="0 0 10 12" fill="none" stroke="#fff" stroke-width="1.8" stroke-linecap="round" stroke-linejoin="round"><path d="M7 2 L3 6 L7 10"/></svg>
<svg style="left:0;top:0;z-index:5" width="2048" height="989" viewBox="0 0 2048 989"><path d="M0 977 Q1 987 7 989 H0 Z" fill="#161a21"/><path d="M2048 981 Q2047 987 2043.5 989 H2048 Z" fill="#161a21"/></svg>
</body></html>
